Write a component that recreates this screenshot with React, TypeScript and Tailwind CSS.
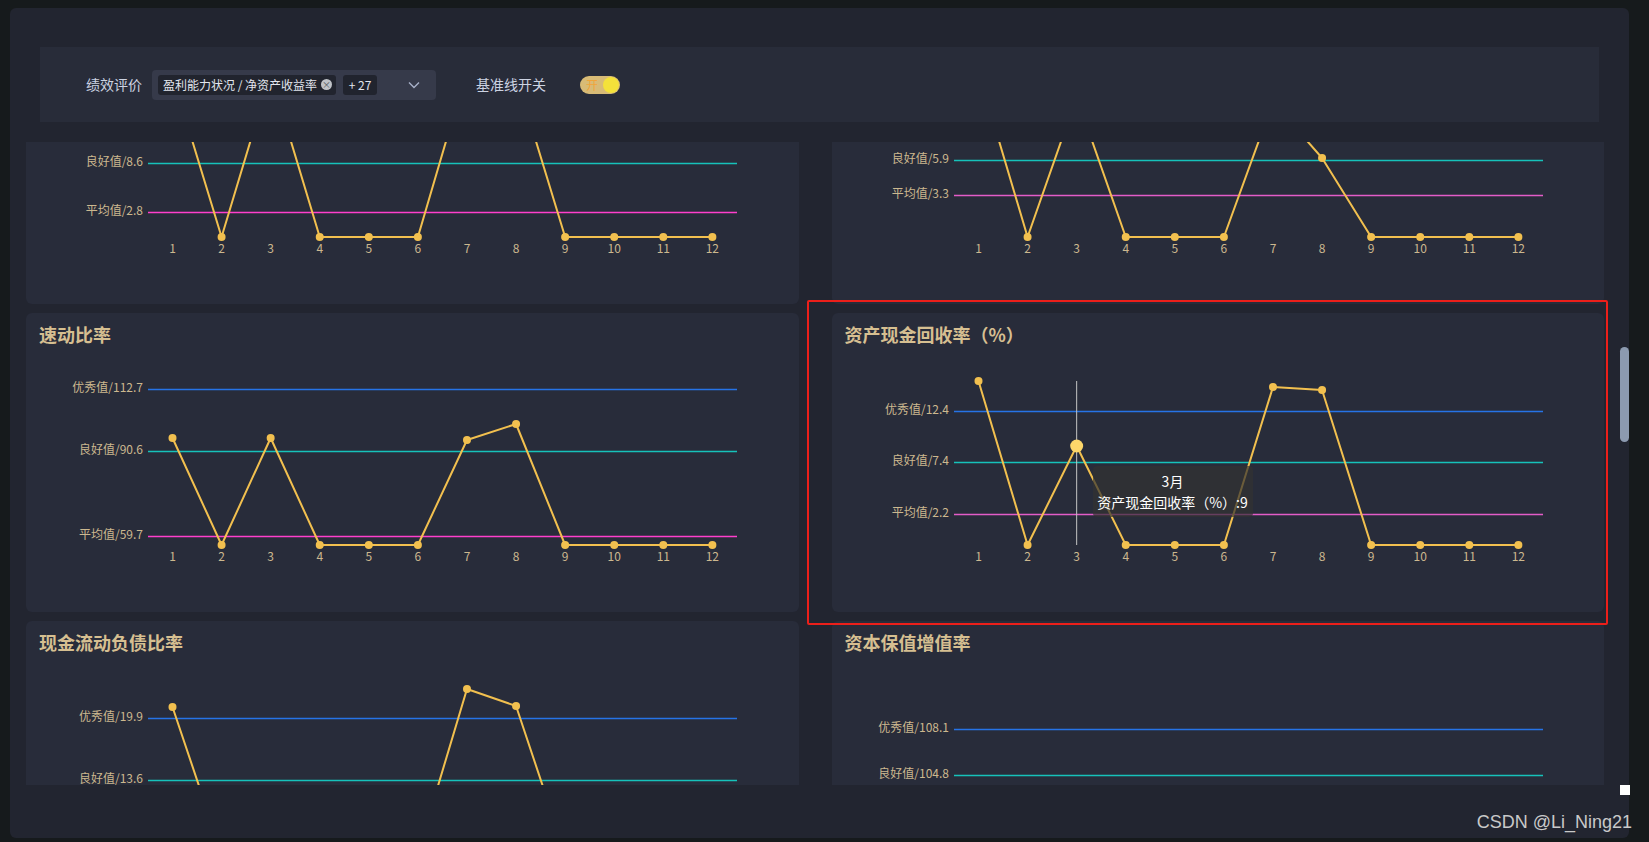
import { useLayoutEffect, useRef } from 'react';

type Ref = { label: string; y: number; color: string };
type ChartData = {
  title: string;
  refs: Ref[];
  pts: number[];
  hover?: number;
  tip?: string[];
};

const BLUE = '#2673e6';
const TEAL = '#16c2ba';
const PINK = '#ff3fcc';
const PINK2 = '#e35cc8';
const GOLD = '#f2c04f';

const px = (i: number) => 146.5 + 49.08 * i;

const charts: ChartData[] = [
  {
    title: '净资产收益率（%）',
    refs: [
      { label: '良好值/8.6', y: 118, color: TEAL },
      { label: '平均值/2.8', y: 167, color: PINK },
    ],
    pts: [31, 192, 29, 192, 192, 192, 25, 31, 192, 192, 192, 192],
  },
  {
    title: '总资产报酬率（%）',
    refs: [
      { label: '良好值/5.9', y: 115, color: TEAL },
      { label: '平均值/3.3', y: 150, color: PINK2 },
    ],
    pts: [27, 192, 52, 192, 192, 192, 57, 113, 192, 192, 192, 192],
  },
  {
    title: '速动比率',
    refs: [
      { label: '优秀值/112.7', y: 36, color: BLUE },
      { label: '良好值/90.6', y: 98, color: TEAL },
      { label: '平均值/59.7', y: 183, color: PINK },
    ],
    pts: [85, 192, 85, 192, 192, 192, 87, 71, 192, 192, 192, 192],
  },
  {
    title: '资产现金回收率（%）',
    refs: [
      { label: '优秀值/12.4', y: 58, color: BLUE },
      { label: '良好值/7.4', y: 109, color: TEAL },
      { label: '平均值/2.2', y: 161, color: PINK2 },
    ],
    pts: [28, 192, 93, 192, 192, 192, 34, 37, 192, 192, 192, 192],
    hover: 2,
    tip: ['3月', '资产现金回收率（%）:9'],
  },
  {
    title: '现金流动负债比率',
    refs: [
      { label: '优秀值/19.9', y: 57, color: BLUE },
      { label: '良好值/13.6', y: 119, color: TEAL },
      { label: '平均值/6.1', y: 172, color: PINK },
    ],
    pts: [46, 192, 192, 192, 192, 192, 28, 45, 192, 192, 192, 192],
  },
  {
    title: '资本保值增值率',
    refs: [
      { label: '优秀值/108.1', y: 68, color: BLUE },
      { label: '良好值/104.8', y: 114, color: TEAL },
      { label: '平均值/101.2', y: 163, color: PINK2 },
    ],
    pts: [150, 192, 150, 192, 192, 192, 140, 150, 192, 192, 192, 192],
  },
];

function ChartCard({ c }: { c: ChartData }) {
  const d = c.pts.map((y, i) => `${i ? 'L' : 'M'}${px(i)} ${y}`).join(' ');
  return (
    <div className="relative h-[299px] bg-[#282c3a] rounded-md flex flex-col">
      <div className="h-[40px] pl-[13px] pt-[10px] text-[18px] leading-[22px] font-bold text-[#d6bf91]">
        {c.title}
      </div>
      <svg width="772" height="259" className="block">
        {c.refs.map((r) => (
          <g key={r.label}>
            <line x1="122" x2="711" y1={r.y + 0.5} y2={r.y + 0.5} stroke={r.color} strokeWidth="1.5" />
            <text x="117" y={r.y} textAnchor="end" dominantBaseline="middle" fontSize="12" fill="#ccb88f">
              {r.label}
            </text>
          </g>
        ))}
        {c.hover !== undefined && (
          <line x1={px(c.hover)} x2={px(c.hover)} y1="28" y2="192" stroke="#c4c4c4" strokeWidth="1" />
        )}
        <path d={d} fill="none" stroke={GOLD} strokeWidth="2" strokeLinejoin="round" />
        {c.pts.map((y, i) =>
          i === c.hover ? (
            <circle key={i} cx={px(i)} cy={y} r="6.5" fill="#fdd66a" />
          ) : (
            <circle key={i} cx={px(i)} cy={y} r="4" fill={GOLD} />
          )
        )}
        {c.pts.map((_, i) => (
          <text key={i} x={px(i)} y="205" textAnchor="middle" dominantBaseline="middle" fontSize="12" fill="#ccb88f">
            {i + 1}
          </text>
        ))}
      </svg>
      {c.tip && (
        <div className="absolute left-[261px] top-[153px] w-[160px] h-[51px] rounded bg-[rgba(50,50,50,0.7)] flex flex-col items-center justify-center text-[14px] leading-[21px] text-white">
          <div>{c.tip[0]}</div>
          <div>{c.tip[1]}</div>
        </div>
      )}
    </div>
  );
}

export default function App() {
  const scrollRef = useRef<HTMLDivElement>(null);
  useLayoutEffect(() => {
    if (scrollRef.current) scrollRef.current.scrollTop = 137;
  }, []);

  return (
    <div className="relative w-[1649px] h-[842px] bg-[#161a1c] overflow-hidden font-['Noto_Sans_CJK_SC','Noto_Sans',sans-serif]">
      <div className="absolute left-[10px] top-[8px] w-[1619px] h-[830px] bg-[#222530] rounded-md flex flex-col">
        {/* 筛选栏 */}
        <div className="mx-[30px] mt-[39px] h-[75px] bg-[#282c39] flex items-center pl-[46px]">
          <span className="text-[14px] text-[#ccd3e2]">绩效评价</span>
          <div className="ml-[10px] w-[284px] h-[30px] bg-[#363a4a] rounded flex items-center pl-[6px]">
            <div className="h-[20px] bg-[#21242e] rounded-[3px] flex items-center pl-[5px] pr-[4px] gap-[4px]">
              <span className="text-[12px] text-[#e2e6ef] leading-none">盈利能力状况 / 净资产收益率</span>
              <span className="w-[11px] h-[11px] rounded-full bg-[#c0c3c8] flex items-center justify-center text-[9px] leading-none text-[#50535c]">
                ×
              </span>
            </div>
            <div className="ml-[7px] h-[20px] w-[34px] bg-[#21242e] rounded-[3px] flex items-center justify-center text-[12px] text-[#e2e6ef]">
              + 27
            </div>
            <svg className="ml-[31px]" width="12" height="8" viewBox="0 0 12 8">
              <path d="M1 1.5 L6 6.5 L11 1.5" fill="none" stroke="#a7b0c8" strokeWidth="1.4" />
            </svg>
          </div>
          <span className="ml-[40px] text-[14px] text-[#ccd3e2]">基准线开关</span>
          <div className="ml-[34px] w-[40px] h-[18px] rounded-full bg-[#d8bb76] flex items-center justify-between pl-[6px] pr-[1px]">
            <span className="text-[12px] leading-none text-[#f0a53a]">开</span>
            <span className="w-[16px] h-[16px] rounded-full bg-[#f4e13a]" />
          </div>
        </div>

        {/* 图表区域 */}
        <div ref={scrollRef} className="mt-[20px] h-[643px] overflow-hidden pl-[16px] pr-[25px]">
          <div className="grid grid-cols-2 gap-x-[33px] gap-y-[9px]">
            {charts.map((c) => (
              <ChartCard key={c.title} c={c} />
            ))}
          </div>
        </div>
      </div>

      {/* 滚动条 */}
      <div className="absolute left-[1620px] top-[347px] w-[9px] h-[95px] rounded-full bg-[#8c9ab0]" />
      <div className="absolute left-[1620px] top-[785px] w-[10px] h-[10px] bg-white" />

      {/* 标注框 */}
      <div className="absolute left-[807px] top-[300px] w-[801px] h-[325px] border-2 border-[#ec1f1a] rounded-[2px]" />

      <div className="absolute right-[17px] top-[810px] text-[18px] leading-[24px] text-[#c9c9c9] font-['Liberation_Sans',sans-serif]">
        CSDN @Li_Ning21
      </div>
    </div>
  );
}
